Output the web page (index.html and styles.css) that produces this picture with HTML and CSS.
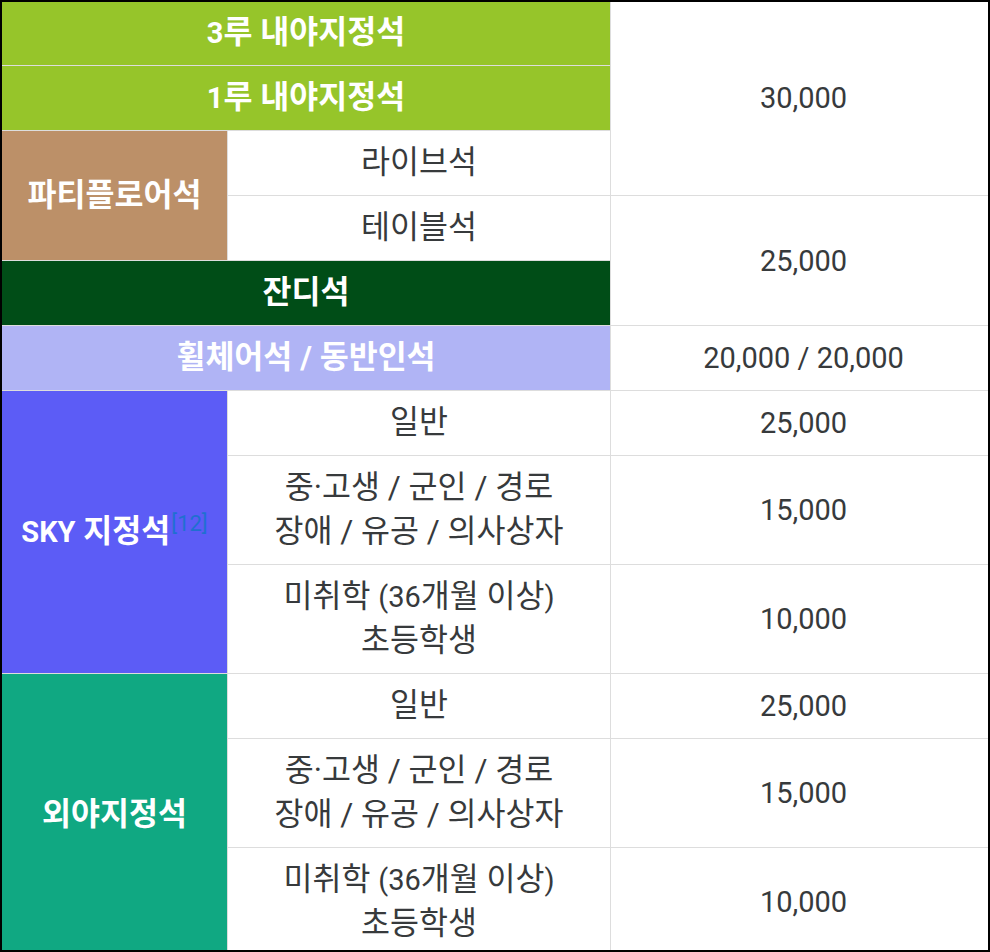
FILE: index.html
```html
<!DOCTYPE html>
<html lang="ko">
<head>
<meta charset="utf-8">
<title>좌석 가격표</title>
<link rel="stylesheet" href="styles.css">
</head>
<body>
<div class="frame">
<table class="price">
<colgroup><col class="c1"><col class="c2"><col class="c3"></colgroup>
<tr><th colspan="2" class="lime"><span class="num">3</span>루 내야지정석</th><td rowspan="3" class="n">30,000</td></tr>
<tr><th colspan="2" class="lime"><span class="num">1</span>루 내야지정석</th></tr>
<tr><th rowspan="2" class="brown">파티플로어석</th><td>라이브석</td></tr>
<tr><td>테이블석</td><td rowspan="2" class="n">25,000</td></tr>
<tr><th colspan="2" class="forest">잔디석</th></tr>
<tr><th colspan="2" class="lilac">휠체어석 / 동반인석</th><td class="n">20,000 / 20,000</td></tr>
<tr><th rowspan="3" class="sky"><span class="num">SKY</span> 지정석<sup class="ref">[12]</sup></th><td>일반</td><td class="n">25,000</td></tr>
<tr><td>중·고생 / 군인 / 경로<br>장애 / 유공 / 의사상자</td><td class="n">15,000</td></tr>
<tr><td>미취학 <span class="num">(36</span>개월 이상<span class="num">)</span><br>초등학생</td><td class="n">10,000</td></tr>
<tr><th rowspan="3" class="teal">외야지정석</th><td>일반</td><td class="n">25,000</td></tr>
<tr><td>중·고생 / 군인 / 경로<br>장애 / 유공 / 의사상자</td><td class="n">15,000</td></tr>
<tr><td>미취학 <span class="num">(36</span>개월 이상<span class="num">)</span><br>초등학생</td><td class="n">10,000</td></tr>
</table>
</div>
</body>
</html>
```
FILE: styles.css
```css
html, body {
  margin: 0;
  padding: 0;
  background: #fff;
}
.frame {
  width: 990px;
  height: 952px;
  box-sizing: border-box;
  border: 2px solid #000;
  overflow: hidden;
  background: #fff;
}
.price {
  border-collapse: collapse;
  table-layout: fixed;
  width: 995px;
  margin: -2px 0 0 -1px;
  font-family: Roboto, "Noto Sans CJK KR", sans-serif;
  font-size: 31.5px;
  line-height: 44px;
  color: #373a3c;
}
.c1 { width: 226px; }
.c2 { width: 383px; }
.c3 { width: 386px; }
.price th, .price td {
  border: 1px solid #dddddd;
  padding: 10px 4px;
  height: 44px;
  text-align: center;
  vertical-align: middle;
  font-weight: 400;
}
.price th {
  color: #fff;
  font-weight: 700;
}
.price .n,
.num {
  font-size: 29px;
}
.lime { background: #96c52a; }
.brown { background: #bc9068; }
.forest { background: #004d17; }
.lilac { background: #b0b4f5; }
.sky { background: #5c5cf6; }
.teal { background: #10a882; }
.ref {
  font-size: 22px;
  font-weight: 400;
  line-height: 0;
  color: #1f6fd0;
  vertical-align: 11px;
  margin-left: 1px;
}
```
